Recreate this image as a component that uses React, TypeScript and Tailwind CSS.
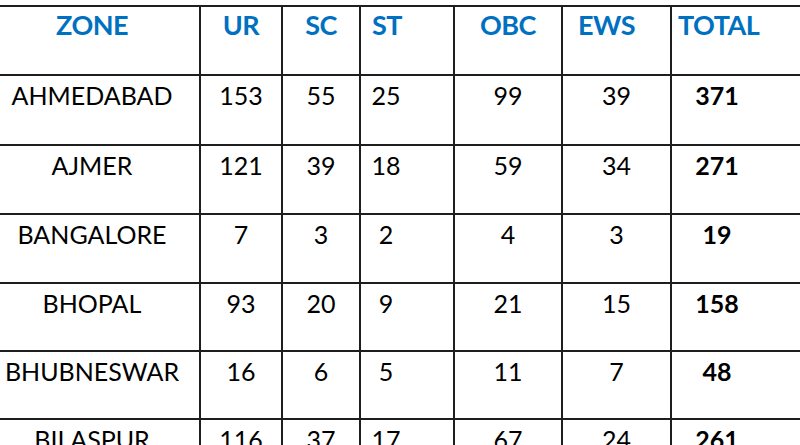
import React from "react";

const rows = [
  ["AHMEDABAD", "153", "55", "25", "99", "39", "371"],
  ["AJMER", "121", "39", "18", "59", "34", "271"],
  ["BANGALORE", "7", "3", "2", "4", "3", "19"],
  ["BHOPAL", "93", "20", "9", "21", "15", "158"],
  ["BHUBNESWAR", "16", "6", "5", "11", "7", "48"],
  ["BILASPUR", "116", "37", "17", "67", "24", "261"],
];

const heights = ["h-[70px]", "h-[69px]", "h-[69px]", "h-[68px]", "h-[68px]", "h-[70px]"];

const grid = "grid grid-cols-[199px_82px_78px_94px_108px_109px_1fr] border-t-2 border-[#1e1e1e]";
const cell = "border-l-2 border-[#1e1e1e]";

export default function App() {
  return (
    <div
      className="w-[800px] h-[445px] overflow-hidden bg-white pt-[5px]"
      style={{ fontFamily: "Lato, 'Liberation Sans', sans-serif" }}
    >
      <div className={`${grid} h-[69px] text-[27px] font-bold text-[#0070c0] leading-[32px] tracking-[-0.5px]`}>
        <div className="pr-[15px] pt-[2px] text-center">ZONE</div>
        <div className={`${cell} pt-[2px] text-center`}>UR</div>
        <div className={`${cell} pt-[2px] text-center`}>SC</div>
        <div className={`${cell} pt-[2px] pl-[11px]`}>ST</div>
        <div className={`${cell} pt-[2px] text-center`}>OBC</div>
        <div className={`${cell} pt-[2px] pl-[15px]`}>EWS</div>
        <div className={`${cell} pt-[2px] pl-[6px]`}>TOTAL</div>
      </div>
      {rows.map((r, i) => (
        <div key={r[0]} className={`${grid} ${heights[i]} text-[25px] text-black leading-[30px]`}>
          <div className="pr-[15px] pt-[4px] text-center">{r[0]}</div>
          <div className={`${cell} pt-[4px] text-center`}>{r[1]}</div>
          <div className={`${cell} pt-[4px] text-center`}>{r[2]}</div>
          <div className={`${cell} pt-[4px]`}>
            <div className="w-[50px] text-center">{r[3]}</div>
          </div>
          <div className={`${cell} pt-[4px] text-center`}>{r[4]}</div>
          <div className={`${cell} pt-[4px] text-center`}>{r[5]}</div>
          <div className={`${cell} pt-[4px]`}>
            <div className="w-[90px] text-center font-bold">{r[6]}</div>
          </div>
        </div>
      ))}
    </div>
  );
}
